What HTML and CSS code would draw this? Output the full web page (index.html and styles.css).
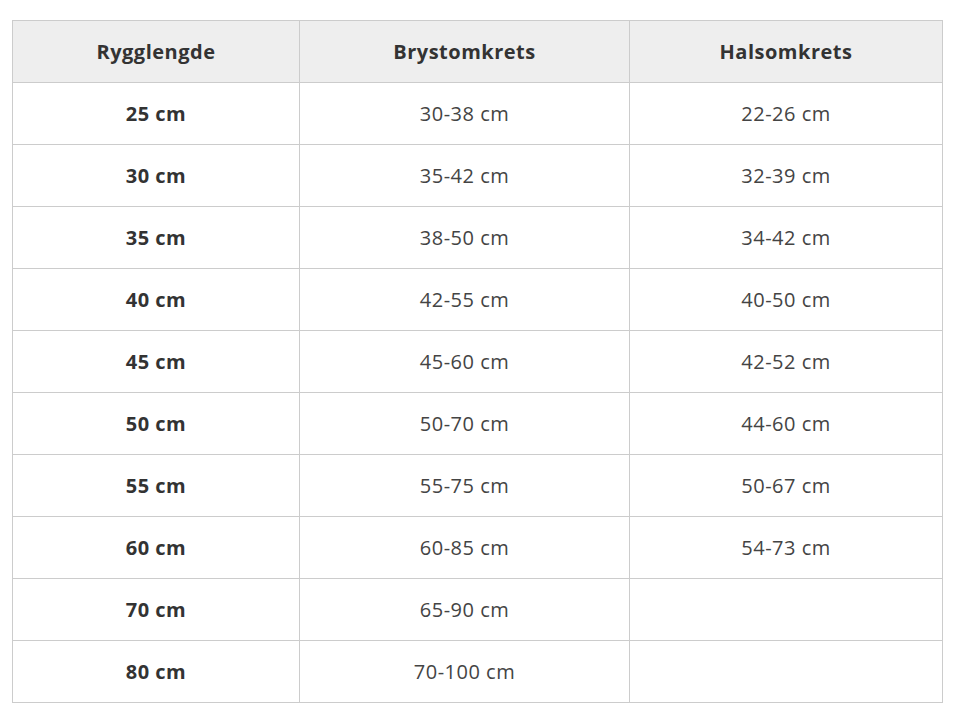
FILE: index.html
```html
<!DOCTYPE html>
<html>
<head>
<meta charset="utf-8">
<link rel="stylesheet" href="styles.css">
</head>
<body>
<table class="size-table">
  <colgroup>
    <col class="c1"><col class="c2"><col class="c3">
  </colgroup>
  <thead>
    <tr><th>Rygglengde</th><th>Brystomkrets</th><th>Halsomkrets</th></tr>
  </thead>
  <tbody>
    <tr><td class="b">25 cm</td><td>30-38 cm</td><td>22-26 cm</td></tr>
    <tr><td class="b">30 cm</td><td>35-42 cm</td><td>32-39 cm</td></tr>
    <tr><td class="b">35 cm</td><td>38-50 cm</td><td>34-42 cm</td></tr>
    <tr><td class="b">40 cm</td><td>42-55 cm</td><td>40-50 cm</td></tr>
    <tr><td class="b">45 cm</td><td>45-60 cm</td><td>42-52 cm</td></tr>
    <tr><td class="b">50 cm</td><td>50-70 cm</td><td>44-60 cm</td></tr>
    <tr><td class="b">55 cm</td><td>55-75 cm</td><td>50-67 cm</td></tr>
    <tr><td class="b">60 cm</td><td>60-85 cm</td><td>54-73 cm</td></tr>
    <tr><td class="b">70 cm</td><td>65-90 cm</td><td></td></tr>
    <tr><td class="b">80 cm</td><td>70-100 cm</td><td></td></tr>
  </tbody>
</table>
</body>
</html>
```
FILE: styles.css
```css
html, body {
  margin: 0;
  background: #fff;
}
body {
  padding: 20px 12px;
  font-family: "Open Sans", "Liberation Sans", sans-serif;
  color: #333;
}
.size-table {
  border-collapse: collapse;
  table-layout: fixed;
  width: 930px;
}
.c1 { width: 287px; }
.c2 { width: 330px; }
.c3 { width: 313px; }
.size-table th,
.size-table td {
  border: 1px solid #ccc;
  height: 61px;
  padding: 0;
  text-align: center;
  vertical-align: middle;
  font-size: 20px;
  line-height: 24px;
  letter-spacing: 0.5px;
}
.size-table th {
  background: #eee;
  font-weight: 700;
  color: #333;
}
.size-table td {
  font-weight: 400;
  color: #444;
}
.size-table td.b {
  font-weight: 700;
  color: #333;
}
```
